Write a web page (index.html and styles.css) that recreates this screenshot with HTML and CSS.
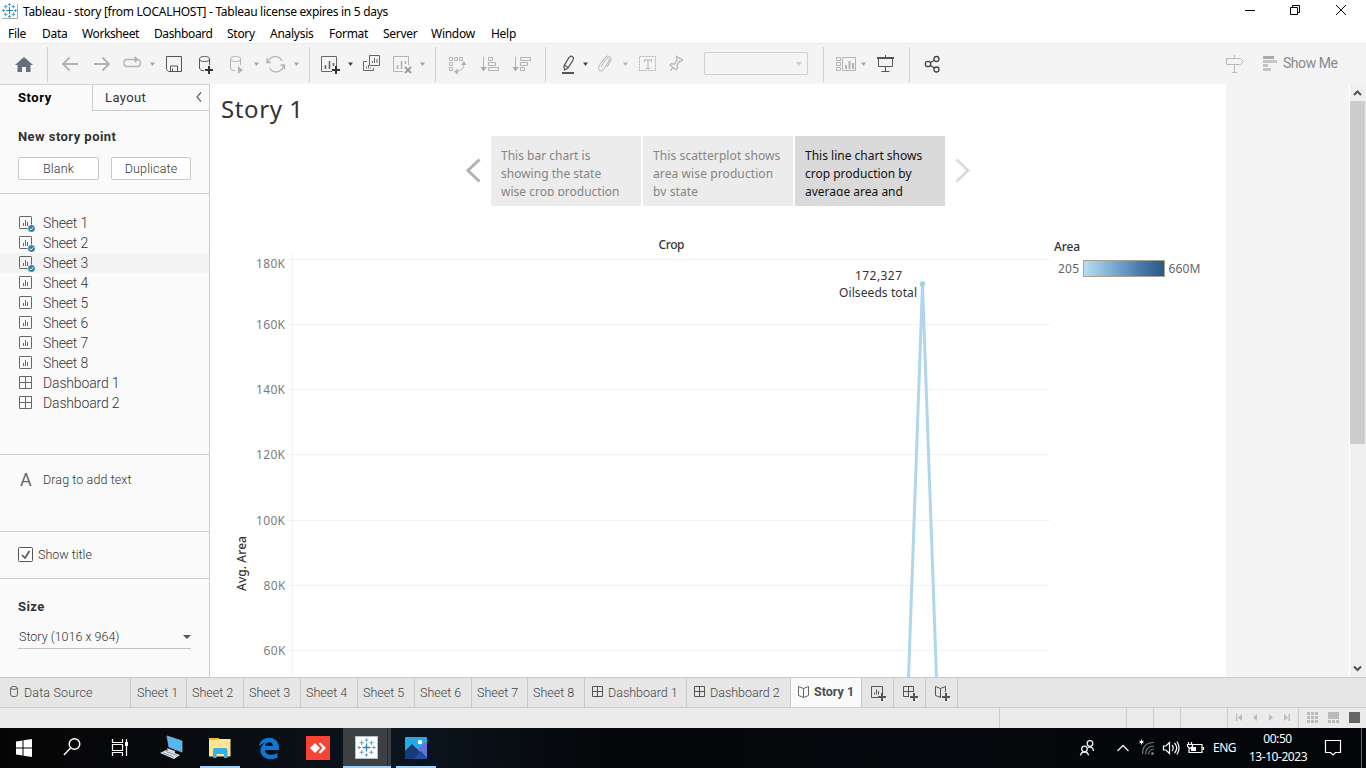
FILE: index.html
```html
<!DOCTYPE html>
<html lang="en">
<head>
<meta charset="utf-8">
<title>Tableau - story</title>
<link rel="stylesheet" href="styles.css">
</head>
<body>
<svg class="defs" width="0" height="0">
  <symbol id="sheet" viewBox="0 0 17 17"><rect x="1.500" y="1.500" width="12" height="12" rx=".6" fill="none" stroke="#666"/><path d="M5.500 8v3M7.500 5v6M9.500 7v4" stroke="#666" fill="none"/></symbol>
  <symbol id="check" viewBox="0 0 17 17"><circle cx="13.500" cy="13.500" r="3.800" fill="#2f7f9f" stroke="#fafafa" stroke-width=".6"/><path d="M11.600 13.500l1.400 1.400 2.500-2.700" stroke="#fff" fill="none"/></symbol>
  <symbol id="dash" viewBox="0 0 17 17"><path d="M1.500 1.500h12v12h-12zM7.500 1.500v12M1.500 7.500h12" fill="none" stroke="#666"/></symbol>
  <symbol id="logo" viewBox="0 0 24 24"><g fill="none"><path d="M12 7.500v9M7.500 12h9" stroke="#2c7db0" stroke-width="1.500"/><path d="M12 1.500v4M10 3.500h4M12 18.500v4M10 20.500h4M3.500 10v4M1.500 12h4M20.500 10v4M18.500 12h4" stroke="#4b97bd"/><path d="M6.500 4v5M4 6.500h5M17.500 4v5M15 6.500h5M6.500 15v5M4 17.500h5M17.500 15v5M15 17.500h5" stroke="#65a7c9" stroke-width="1.200"/></g></symbol>
</svg>

<header class="titlebar">
  <svg class="app-icon" width="16" height="17"><path d="M0 15.500h15.500V1" stroke="#aaa" fill="none"/><use href="#logo" x="-1" y="-1" width="17" height="17"/><use href="#logo" x="-1" y="-1" width="17" height="17"/></svg>
  <span class="window-title">Tableau - story [from LOCALHOST] - Tableau license expires in 5 days</span>
  <svg class="window-buttons" width="126" height="24" viewBox="1240 0 126 24" fill="none" stroke="#000"><path d="M1245 10.500h10M1290.500 7.500h7v7h-7zM1292.500 7.500v-2h7v7h-2M1336 5l10 10M1346 5l-10 10"/></svg>
</header>
<nav class="menubar"><span class="m1">File</span><span class="m2">Data</span><span class="m3">Worksheet</span><span class="m4">Dashboard</span><span class="m5">Story</span><span class="m6">Analysis</span><span class="m7">Format</span><span class="m8">Server</span><span class="m9">Window</span><span>Help</span></nav>

<div class="toolbar">
  <svg class="tool-group" width="48" height="40" viewBox="0 44 48 40"><path d="M24 57l-9 8h2.500v7h4.500v-5h4v5h4.500v-7H33z" fill="#66737f"/></svg>
  <svg class="tool-group" width="262" height="40" viewBox="48 44 262 40" fill="none" stroke="#b3b3b3">
    <g stroke-width="1.800"><path d="M78 64H63M69.500 57.500L63 64l6.500 6.500M94 64h15M102.500 57.500L109 64l-6.500 6.500"/></g>
    <path stroke-width="1.400" d="M134 59.500h-7q-3 0-3 3.500t3 3.500h10.500q3 0 3-3.500 0-2.500-2-3.500M131 59.500h6"/><path d="M134.500 56l4.500 3.500-4.500 3.500z" fill="#b3b3b3" stroke="none"/>
    <path d="M150 62.500h5l-2.500 3.500zM254 62.500h5l-2.500 3.500zM294 62.500h5l-2.500 3.500z" fill="#a5a5a5" stroke="none"/>
    <path d="M166.500 56.500h15v15h-13l-2-2zM170.500 71v-5h7v5M172.500 71v-2.500" stroke="#555"/>
    <g stroke="#555"><ellipse cx="204.500" cy="59" rx="5" ry="2.500"/><path d="M199.500 59v9q0 2.500 4.500 2.800M209.500 59v6"/></g><path d="M209 66v8M205 70h8" stroke="#333" stroke-width="2"/>
    <ellipse cx="235.500" cy="59" rx="5" ry="2.500"/><path d="M230.500 59v9q0 2.500 4.500 2.800M240.500 59v6"/><path d="M238 66l5 4-5 4z" fill="#b3b3b3" stroke="none"/>
    <path stroke-width="1.300" d="M268 62a7.500 7.500 0 0 1 14-1M283.500 65a7.500 7.500 0 0 1-14 3M267 58v4.500h4M284.500 69.500V65h-4"/>
  </svg>
  <svg class="tool-group" width="126" height="40" viewBox="310 44 126 40" fill="none" stroke="#666">
    <path d="M332 71.500h-10.500v-15h15V66"/><path d="M325.500 69v-4M329.500 69v-8M333.500 66v-3" stroke-width="1.600"/><path d="M336 66v8M332 70h8" stroke="#333" stroke-width="2"/>
    <path d="M348 62.500h5l-2.500 3.500z" fill="#444" stroke="none"/>
    <path d="M369.500 55.500h10v10h-10zM367 61.500h-3.500v9h10V68M372.500 63v-2M374.500 63v-5M377 63v-4M366.500 68.500v-2M368.500 68.500V65M370.500 68.500v-1"/>
    <g stroke="#b3b3b3"><path d="M403 71.500h-9.500v-15h15V65"/><path d="M397.500 69v-4M401.500 69v-8M405.500 64v-3" stroke-width="1.600"/><path d="M405 67l6 6M411 67l-6 6" stroke="#999" stroke-width="1.800"/></g>
    <path d="M420 62.500h5l-2.500 3.500z" fill="#a5a5a5" stroke="none"/>
  </svg>
  <svg class="tool-group" width="110" height="40" viewBox="436 44 110 40" fill="none" stroke="#b3b3b3">
    <path d="M449.500 57.500h3v3h-3zM454.500 57.500h3v3h-3zM459.500 57.500h3v3h-3zM449.500 62.500h3v3h-3zM449.500 67.500h3v3h-3zM456 71.500q8-.5 8-8.500"/><path d="M458 68.500v6l-4-3zM461 65l3-4 2.500 4z" fill="#b3b3b3" stroke="none"/>
    <path d="M483.500 57v13M488.500 57.500h4v3h-4zM488.500 62.500h7v3h-7zM488.500 67.500h10v3h-10z"/><path d="M480.500 67h6l-3 4.500z" fill="#aaa" stroke="none"/>
    <path d="M515.500 57v13M520.500 57.500h10v3h-10zM520.500 62.500h7v3h-7zM520.500 67.500h4v3h-4z"/><path d="M512.500 67h6l-3 4.500z" fill="#aaa" stroke="none"/>
  </svg>
  <div class="tool-group format-tools">
    <svg width="158" height="40" viewBox="546 44 158 40" fill="none" stroke="#b3b3b3">
      <g stroke="#555"><path stroke-width="1.200" d="M569 57.500l2-1.500 2.500 1.500-.5 2.500-5 8-3.500 2-.5-4zM565 65.500l3.500 2.200"/><path d="M562 73h12" stroke-width="2"/></g>
      <path d="M583 62.500h5l-2.500 3.500z" fill="#444" stroke="none"/>
      <path d="M601 67l5-8q1-1.500 2.500-.5t.5 2.500l-5.500 8.500q-2 2.500-4 1t-.5-4.500l6-8.500q2-2.500 4.500-1t1 4.500l-3.500 6"/>
      <path d="M623 62.500h5l-2.500 3.500z" fill="#b3b3b3" stroke="none"/>
      <path d="M639.500 56.500h16v14h-16z" stroke-dasharray="2 1"/><path d="M644.500 62v-2h7v2M648 60v8M646 68.500h4"/>
      <path stroke-width="1.200" d="M676.500 56.500l6 3.500-1.500 1.500-1.500-.3-2.500 4 .5 3-1.500 1.500-6-4.500 1.500-1.500 3 .3 2.500-4zM673 67l-2.500 4"/>
    </svg>
    <div class="combo"><i class="caret"></i></div>
  </div>
  <svg class="tool-group" width="86" height="40" viewBox="824 44 86 40" fill="none" stroke="#b3b3b3">
    <path d="M836.500 57.500h4v3h-4zM836.500 62.500h4v3h-4zM836.500 67.500h4v3h-4zM842.500 57.500h13v13h-13z"/><path d="M846 69v-4M849.500 69v-8M853 69v-6" stroke-width="2"/>
    <path d="M861 62.500h5l-2.500 3.500z" fill="#a5a5a5" stroke="none"/>
    <g stroke="#555"><path d="M878.500 58v8.500h14V58M885.500 66.500V71M881.500 71.500h8M885.500 55v2"/><path d="M877 58h17" stroke-width="2"/></g>
  </svg>
  <svg class="share" width="315" height="40" viewBox="910 44 315 40" fill="none" stroke="#444" stroke-width="1.300"><circle cx="928" cy="64" r="2.700"/><circle cx="936.500" cy="59" r="2.500"/><circle cx="936.500" cy="69.500" r="2.500"/><path d="M930.300 62.700l4-2.400M930.300 65.300l4 2.700"/></svg>
  <svg width="57" height="40" viewBox="1225 44 57 40" fill="none" stroke="#bbb"><path d="M1226.500 58.500h14l3 3-3 3h-14zM1234.500 55v3M1234.500 64.500v8M1232 72.500h5"/><path stroke="none" fill="#aaa" d="M1263 56h11v3h-11z"/><path stroke="none" fill="#c5c5c5" d="M1263 60h14v3h-14zM1263 64h5v3h-5zM1263 68h8v3h-8z"/></svg>
  <span class="show-me">Show Me</span>
</div>

<main class="workspace">
  <aside class="sidebar">
    <div class="side-tabs"><span class="side-active">Story</span><span class="side-layout">Layout</span><svg width="16" height="26"><path d="M9 7.500L5 12l4 4.500" stroke="#666" fill="none" stroke-width="1.200"/></svg></div>
    <section class="new-point"><h2>New story point</h2><div class="buttons"><button class="blank">Blank</button><button class="duplicate">Duplicate</button></div></section>
    <section class="sheet-list">
      <div class="item"><svg width="17" height="17"><use href="#sheet"/><use href="#check"/></svg>Sheet 1</div>
      <div class="item"><svg width="17" height="17"><use href="#sheet"/><use href="#check"/></svg>Sheet 2</div>
      <div class="item hover"><svg width="17" height="17"><use href="#sheet"/><use href="#check"/></svg>Sheet 3</div>
      <div class="item"><svg width="17" height="17"><use href="#sheet"/></svg>Sheet 4</div>
      <div class="item"><svg width="17" height="17"><use href="#sheet"/></svg>Sheet 5</div>
      <div class="item"><svg width="17" height="17"><use href="#sheet"/></svg>Sheet 6</div>
      <div class="item"><svg width="17" height="17"><use href="#sheet"/></svg>Sheet 7</div>
      <div class="item"><svg width="17" height="17"><use href="#sheet"/></svg>Sheet 8</div>
      <div class="item dashboard"><svg width="17" height="17"><use href="#dash"/></svg>Dashboard 1</div>
      <div class="item dashboard"><svg width="17" height="17"><use href="#dash"/></svg>Dashboard 2</div>
    </section>
    <section class="drag-text"><b>A</b><span>Drag to add text</span></section>
    <section class="show-title"><svg width="15" height="15"><rect x=".5" y=".5" width="14" height="14" rx="1" fill="#fff" stroke="#555"/><path d="M4 8l3 3 4.500-7" fill="none" stroke="#555" stroke-width="1.600"/></svg><span>Show title</span></section>
    <section class="size"><h2>Size</h2><div class="size-select"><span>Story (1016 x 964)</span><i class="caret dark"></i></div></section>
  </aside>

  <article class="story">
    <h1>Story 1</h1>
    <div class="navigator">
      <svg width="24" height="70" viewBox="464 136 24 70"><path d="M479.500 159.500L468 170.500l11.500 11" fill="none" stroke="#b2b2b2" stroke-width="3"/></svg>
      <div class="point"><p>This bar chart is<br>showing the state<br>wise crop production</p></div>
      <div class="point scatter"><p>This scatterplot shows<br>area wise production<br>by state</p></div>
      <div class="point current"><p>This line chart shows<br>crop production by<br>average area and</p></div>
      <svg class="next" width="24" height="70" viewBox="950 136 24 70"><path d="M956.500 159.500L968 170.500l-11.500 11" fill="none" stroke="#dcdcdc" stroke-width="3"/></svg>
    </div>
    <svg class="chart" width="1016" height="441" viewBox="210 236 1016 441">
      <defs><linearGradient id="area"><stop offset="0" stop-color="#b9ddf1"/><stop offset=".35" stop-color="#7eaed3"/><stop offset=".7" stop-color="#4a7aac"/><stop offset="1" stop-color="#2a5783"/></linearGradient></defs>
      <path d="M287 259.500h763M287 324.500h763M287 389.500h763M287 454.500h763M287 520.500h763M287 585.500h763M287 650.500h763M292.500 254v423" stroke="#f2f2f2" fill="none"/>
      <path d="M908.500 678L922.500 284l14 394" fill="none" stroke="#afd6ed" stroke-width="3" stroke-linejoin="round"/><circle cx="922.500" cy="284" r="2.800" fill="#a5d0eb"/>
      <g class="ticks"><text x="256" y="268" textLength="29">180K</text><text x="256" y="329" textLength="29">160K</text><text x="256" y="394" textLength="29">140K</text><text x="256" y="459" textLength="29">120K</text><text x="256" y="525" textLength="29">100K</text><text x="263.500" y="590" textLength="22">80K</text><text x="263.500" y="655" textLength="22">60K</text></g>
      <g class="labels"><text class="medium" x="658.500" y="249" textLength="26">Crop</text><text class="medium" transform="translate(246 591) rotate(-90)" textLength="55">Avg. Area</text><text x="855" y="280" textLength="47">172,327</text><text x="839" y="297" textLength="78">Oilseeds total</text><text class="medium" x="1054" y="251" textLength="26">Area</text><text class="range" x="1058" y="273" textLength="21">205</text><text class="range" x="1168.500" y="273" textLength="32">660M</text></g>
      <rect x="1083.500" y="260.500" width="81" height="16" fill="url(#area)" stroke="#a8a294"/>
    </svg>
  </article>
  <div class="gutter"></div>
  <div class="scrollbar"><svg width="17" height="17"><path d="M5 11l3.500-3.500L12 11" fill="none" stroke="#505050" stroke-width="2"/></svg><div class="thumb"></div><svg class="down" width="17" height="17"><path d="M5 6.500l3.500 3.500L12 6.500" fill="none" stroke="#505050" stroke-width="2"/></svg></div>
</main>

<nav class="sheet-tabs">
  <div class="tab source"><svg width="11" height="13" fill="none" stroke="#666"><rect x="1.500" y="1.500" width="7" height="10" rx="2.500"/><path d="M1.500 3.500q3.500 2 7 0"/></svg>Data Source</div>
  <div class="tab first">Sheet 1</div><div class="tab">Sheet 2</div><div class="tab">Sheet 3</div><div class="tab">Sheet 4</div><div class="tab">Sheet 5</div><div class="tab">Sheet 6</div><div class="tab seventh">Sheet 7</div><div class="tab">Sheet 8</div>
  <div class="tab board"><svg width="12" height="12" viewBox="0 0 12 12" fill="none" stroke="#555"><path d="M.5 .5h10v10H.500zM5.500 .5v10M.5 5.500h10"/></svg>Dashboard 1</div>
  <div class="tab board wide"><svg width="12" height="12" viewBox="0 0 12 12" fill="none" stroke="#555"><path d="M.5 .5h10v10H.500zM5.500 .5v10M.5 5.500h10"/></svg>Dashboard 2</div>
  <div class="tab selected"><svg width="12" height="12" fill="none" stroke="#666"><path d="M.5 .5L5.500 2.500l5-2v9l-5 2-5-2zM5.500 2.500v9"/></svg>Story 1</div>
  <div class="tab add"><svg width="16" height="16" fill="none" stroke="#555"><path d="M7 11.500H.500V.500h11V7M3.500 8.500v-2M5.500 8.500v-5M7.500 8.500V5"/><path d="M11 7v8M7 11h8" stroke-width="2"/></svg></div>
  <div class="tab add"><svg width="16" height="16" fill="none" stroke="#555"><path d="M6 10.500H.500V.500h10V6M.5 5.500h10M5.500 .5v10"/><path d="M11 7v8M7 11h8" stroke-width="2"/></svg></div>
  <div class="tab add"><svg width="16" height="16" fill="none" stroke="#555"><path d="M6 11.500L.500 9.500v-9l5 2 5-2V6M5.500 2.500v9"/><path d="M11 7v8M7 11h8" stroke-width="2"/></svg></div>
</nav>
<div class="status"><svg width="1366" height="20" viewBox="0 708 1366 20"><path d="M999.500 708v20M1126.500 708v20M1153.500 708v20M1180.500 708v20M1227.500 708v20M1298.500 708v20" stroke="#ccc"/><g fill="#bbb"><path d="M1236 714h1.300v7H1236zM1242 714v7l-4-3.500zM1257 714v7l-4-3.500zM1269 714v7l4-3.500zM1284 714v7l4-3.500zM1288.500 714h1.300v7h-1.300z"/><path d="M1307 712h3v3h-3zM1311 712h3v3h-3zM1315 712h3v3h-3zM1307 716h3v3h-3zM1311 716h3v3h-3zM1315 716h3v3h-3zM1307 720h3v3h-3zM1311 720h3v3h-3zM1315 720h3v3h-3zM1328 712h11v7h-11zM1328 720h3v3h-3zM1332 720h3v3h-3zM1336 720h3v3h-3z"/></g><rect x="1349" y="712" width="11" height="11" fill="#666"/></svg></div>

<footer class="taskbar">
  <svg width="1206" height="40" viewBox="0 728 1206 40" fill="none">
    <path fill="#fff" d="M16 741.500l6.500-1v7H16zM23.500 740.300l8.500-1.300v8.500h-8.500zM16 748.500h6.500v7l-6.500-1zM23.500 748.500H32v8.500l-8.500-1.300z"/>
    <g stroke="#fff" stroke-width="1.400"><circle cx="74.500" cy="744" r="5.300"/><path d="M70.500 748L64 755"/></g>
    <path d="M112.500 739v3.500h10V739M112.500 744.500h10v6h-10zM112.500 756v-3.500h10v3.500M126.500 739v17" stroke="#fff" stroke-width="1.200"/><path d="M125 742h3v4h-3z" fill="#fff"/>
    <path d="M167 736l15 5v11l-13-5z" fill="#52b7f2" stroke="#83b5d2" stroke-width=".8"/><path d="M167 748l8 3v3l-7-2z" fill="#c9d6df"/><path d="M160 753l6-3 14 5-6 4z" fill="#dbe2e7"/><path d="M163 753l11 4M166 751.500l11 4" stroke="#8999a6"/>
    <path fill="#f4bd2c" d="M209 738h10v4h-10z"/><path fill="#ffe493" d="M209 740h8l2-1h11.500v17.500H209z"/><path fill="#35afe5" d="M213 750q0-2 2-2h10.500q2 0 2 2v8H224v-4h-7.500v4H213z"/>
    <path fill="#0a78d4" fill-rule="evenodd" d="M259 746.500C260 735 279 734 279 748v2h-14c0 5.500 8 6 12.500 3v4.500c-8 4-18 0-17-8 .4-3 2-5 4.500-6.500-2.500 0-4.500 1.500-6 3.500zM265 746h8c0-5-7-5-8 0z"/>
    <rect x="306" y="736" width="24" height="24" fill="#f84335"/><path d="M310 748l5-5 5 5-5 5zM318.500 743.500l2-1 5.500 5.500-5.500 5.500-2-1 4-4.500z" fill="#fff"/>
    <rect x="343" y="728" width="48" height="40" fill="#3c4045"/><path d="M387.500 728v40" stroke="#25282c"/><rect x="355.500" y="736.500" width="22" height="22" fill="#fff" stroke="#bbb"/><use href="#logo" x="356" y="737" width="21" height="21"/>
    <defs><clipPath id="photo-clip"><rect x="405" y="737" width="22" height="22" rx="1"/></clipPath></defs>
    <g clip-path="url(#photo-clip)"><rect x="405" y="737" width="22" height="22" fill="#28a9e5"/><path d="M416 751l9-9 3 3v14h-12z" fill="#6574d5"/><path d="M405 751l7-7 16 16h-23z" fill="#153b78"/><path d="M414 759l7-8 7 8z" fill="#224f9c"/></g><circle cx="420" cy="742" r="2.200" fill="#fff"/>
    <path d="M200 766h40v2h-40zM343 766h48v2h-48zM396 766h40v2h-40z" fill="#9fd3f7"/>
    <g stroke="#eee" stroke-width="1.300"><circle cx="1090" cy="743.500" r="2.800"/><circle cx="1084.500" cy="749" r="2.800"/><path d="M1080.500 755.500q.5-3.500 4-3.500t4 3.500M1088 747.500q5-1.500 5.500 3.500M1117.500 751l5.500-5.500 5.500 5.500"/></g>
    <path d="M1141.500 739.500v5M1139.500 741l4 2M1143.500 741l-4 2" stroke="#fff"/><g stroke="#777" stroke-width="1.200"><path d="M1142.500 754q0-11.500 11.500-11.500M1145.500 754.500q.5-8.500 8.500-8.500M1148.500 754.500q.5-5.500 5.500-5.500"/></g><circle cx="1152.500" cy="753.500" r="1.500" fill="#777"/>
    <path d="M1163.500 746h2.500l3.500-3.500v11l-3.500-3.500h-2.500zM1172 745q2.500 3 0 6M1174.500 743q4.500 5 0 10M1177 741.500q4 6.500 0 13" stroke="#fff" stroke-width="1.200"/>
    <path d="M1191 744.500h11v8h-13v-4M1203.500 747v3M1188.500 742v2.500M1191.500 742v2.500M1187.500 744.500h5v2l-2.500 2-2.500-2z" stroke="#fff" stroke-width="1.200"/><path d="M1191 747h5v4h-5z" fill="#fff"/>
  </svg>
  <span class="lang">ENG</span>
  <div class="clock"><span class="time">00:50</span><span class="date">13-10-2023</span></div>
  <svg width="52" height="40" viewBox="1314 728 52 40" fill="none"><path d="M1325.500 740.500h15v12h-5l-2.500 2.500-2.500-2.500h-5z" stroke="#fff" stroke-width="1.200"/><path d="M1361.500 728v40" stroke="#666"/></svg>
</footer>
</body>
</html>
```
FILE: styles.css
```css
* { box-sizing: border-box; }
body { margin: 0; width: 1366px; height: 768px; overflow: hidden; background: #fff; font-family: Roboto, "Noto Sans", sans-serif; font-size: 13px; color: #4e4e4e; }
svg { display: block; flex: none; }
.defs { position: absolute; }
h1, h2, p { margin: 0; }

.titlebar { display: flex; height: 24px; font: 12px/24px "Noto Sans", sans-serif; color: #000; }
.app-icon { margin: 3px 4px 0 2px; }
.window-title { flex: 1; letter-spacing: -.285px; padding-left: 1px; }
.menubar { display: flex; height: 19px; padding-left: 8px; font: 12px/20px "Noto Sans", sans-serif; letter-spacing: -.27px; color: #000; }
.menubar span { flex: none; width: 60px; white-space: nowrap; }
.menubar .m1 { width: 34px; }
.menubar .m2 { width: 40px; }
.menubar .m3 { width: 72px; letter-spacing: -.5px; }
.menubar .m3, .menubar .m4 { letter-spacing: -.4px; }
.menubar .m4 { width: 73px; }
.menubar .m5 { width: 43px; }
.menubar .m6 { width: 59px; }
.menubar .m7 { width: 54px; }
.menubar .m8 { width: 48px; }
.menubar .m9 { width: 60px; }

.toolbar { display: flex; height: 41px; background: #f4f4f4; border-top: 1px solid #ebebeb; }
.tool-group { background: linear-gradient(#d0d0d0, #d0d0d0) right 3px / 1px 35px no-repeat; }
.format-tools { display: flex; width: 278px; }
.combo { display: flex; justify-content: flex-end; width: 104px; height: 23px; margin-top: 8px; padding: 9px 5px 0 0; border: 1px solid #d0d0d0; border-radius: 2px; }
.caret { width: 0; height: 0; border: 3.5px solid transparent; border-top: 4px solid #ccc; border-bottom: 0; }
.caret.dark { border-width: 4px 4px 0; border-top-color: #555; }
.show-me { padding-left: 1px; font-size: 14px; line-height: 39px; letter-spacing: -.45px; color: #898989; }

.workspace { display: flex; height: 593px; }
.sidebar { width: 210px; border-right: 1px solid #ccc; background: #fafafa; color: #333; font-weight: 300; }
.side-tabs { display: flex; height: 27px; border-top: 1px solid #d4d4d4; line-height: 25px; }
.side-active { width: 92px; padding-left: 18px; color: #000; font-weight: 700; letter-spacing: .55px; }
.side-layout { width: 100px; padding-left: 12px; border-left: 1px solid #ccc; border-bottom: 1px solid #ccc; font-weight: 400; letter-spacing: .4px; }
.side-tabs svg { width: 17px; border-bottom: 1px solid #ccc; }
.sidebar h2 { font-size: 13px; line-height: 19px; color: #333; font-weight: 700; letter-spacing: .45px; }
.sidebar section { border-bottom: 1px solid #ccc; }
.new-point { height: 83px; padding: 16px 0 0 18px; }
.buttons { display: flex; gap: 12px; margin-top: 11px; }
button { width: 81px; height: 23px; padding: 0; border: 1px solid #c9c9c9; border-radius: 2px; background: #fff; color: #333; font: 300 12.5px Roboto, sans-serif; letter-spacing: .15px; }
.duplicate { width: 80px; }
.sheet-list { height: 261px; padding-top: 19px; }
.item { display: flex; height: 20px; padding-left: 18px; line-height: 21px; font-size: 14px; letter-spacing: -.15px; gap: 8px; }
.item svg { margin-top: 2px; }
.item.hover { background: #f4f4f4; }
.drag-text { display: flex; height: 77px; padding: 15px 0 0 20px; font-size: 12.5px; line-height: 20px; letter-spacing: .1px; }
.drag-text b { width: 23px; font-weight: 400; font-size: 18px; color: #666; }
.show-title { display: flex; gap: 5px; height: 47px; padding: 15px 0 0 18px; line-height: 16px; font-size: 12.5px; }
.sidebar .size { border: 0; padding: 18px 18px 0; }
.size-select { display: flex; justify-content: space-between; align-items: center; height: 24px; margin-top: 9px; padding-left: 1px; border-bottom: 1px solid #c3c3c3; font-size: 12.5px; width: 173px; }

.story { width: 1016px; background: #fff; font-family: "Noto Sans", sans-serif; }
.story h1 { height: 52px; padding: 7px 0 0 11px; font-size: 24px; line-height: 35px; font-weight: 400; color: #333; letter-spacing: .6px; }
.navigator { display: flex; height: 100px; padding-left: 254px; }
.navigator > svg { margin-right: 3px; }
.navigator .next { margin-left: 3px; }
.point { width: 150px; height: 70px; margin-right: 2px; padding: 10px 0 10px 10px; background: #ececec; color: #858585; }
.point p { height: 50px; overflow: hidden; font-size: 12px; line-height: 18px; white-space: nowrap; padding-top: 1px; }
.point.scatter p { letter-spacing: .1px; }
.point.current { background: #dadada; color: #111; }
.chart { font: 12px "Noto Sans", sans-serif; }
.ticks { fill: #7c7c7c; }
.labels { fill: #333; }
.medium { font-weight: 500; }
.range { fill: #666; }
.gutter { width: 123px; background: #f4f4f4; }
.scrollbar { display: flex; flex-direction: column; width: 17px; background: #f0f0f0; border-left: 1px solid #fff; }
.thumb { width: 15px; height: 343px; background: #cdcdcd; }
.down { margin-top: auto; }
.scrollbar svg { margin-left: -1px; }

.sheet-tabs { display: flex; height: 31px; background: #e6e6e6; border-top: 1px solid #c9c9c9; border-bottom: 1px solid #ccc; color: #444; font-size: 12.5px; font-weight: 300; line-height: 30px; }
.tab { width: 57px; padding-left: 5px; border-right: 1px solid #c9c9c9; white-space: nowrap; }
.tab.first { width: 56px; padding-left: 6px; }
.tab.seventh { width: 56px; }
.tab.source { display: flex; gap: 4px; width: 131px; padding-left: 9px; letter-spacing: .15px; }
.tab.source svg { margin-top: 7px; }
.tab.board { display: flex; gap: 4px; width: 102px; padding-left: 7px; }
.tab.board.wide { width: 104px; }
.tab.board svg { margin-top: 8px; }
.tab.selected { display: flex; gap: 4px; width: 71px; padding-left: 7px; background: #fafafa; color: #4e4e4e; font-weight: 700; line-height: 27px; }
.tab.selected svg { margin-top: 8px; }
.tab.add { width: 32px; padding: 8px 0 0 9px; }
.status { height: 20px; background: #ebebeb; }
.taskbar { display: flex; height: 40px; background: linear-gradient(90deg, #050505, #090a0e 12%, #0b151e 30%, #050609 45%, #07080d 65%, #040508); color: #fff; font: 12px "Noto Sans", sans-serif; }
.lang { width: 39px; padding-left: 7px; line-height: 40px; letter-spacing: -.5px; }
.clock { display: flex; flex-direction: column; width: 69px; padding-top: 2px; text-align: center; line-height: 18px; letter-spacing: -.45px; white-space: nowrap; align-items: center; }
.time { margin-left: -4px; }
.date { margin-left: -3px; }
```
